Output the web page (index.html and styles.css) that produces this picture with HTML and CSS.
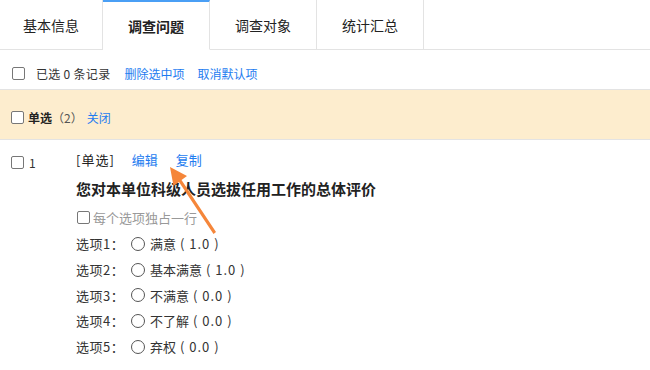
FILE: index.html
```html
<!DOCTYPE html>
<html lang="zh">
<head>
<meta charset="utf-8">
<link rel="stylesheet" href="styles.css">
</head>
<body>
<div class="tabs">
  <div class="tab first">基本信息</div>
  <div class="tab active">调查问题</div>
  <div class="tab">调查对象</div>
  <div class="tab">统计汇总</div>
  <div class="tab-rest"></div>
</div>
<div class="toolbar">
  <span class="cb"></span>
  <span class="sel">已选 0 条记录</span>
  <a class="link">删除选中项</a>
  <a class="link">取消默认项</a>
</div>
<div class="group">
  <span class="cb"></span>
  <b class="gname">单选</b><span class="count">（2）</span>
  <a class="link">关闭</a>
</div>
<div class="question">
  <div class="qleft"><span class="cb"></span><span class="num">1</span></div>
  <div class="qbody">
    <div class="qhead"><span class="qtype">[单选]</span><a class="link">编辑</a><a class="link">复制</a></div>
    <div class="qtitle">您对本单位科级人员选拔任用工作的总体评价</div>
    <div class="qline"><span class="cb"></span><span class="gray">每个选项独占一行</span></div>
    <div class="opts">
      <div class="opt"><span class="olabel">选项1：</span><span class="radio"></span><span>满意<span class="val"> ( 1.0 )</span></span></div>
      <div class="opt"><span class="olabel">选项2：</span><span class="radio"></span><span>基本满意<span class="val"> ( 1.0 )</span></span></div>
      <div class="opt"><span class="olabel">选项3：</span><span class="radio"></span><span>不满意<span class="val"> ( 0.0 )</span></span></div>
      <div class="opt"><span class="olabel">选项4：</span><span class="radio"></span><span>不了解<span class="val"> ( 0.0 )</span></span></div>
      <div class="opt"><span class="olabel">选项5：</span><span class="radio"></span><span>弃权<span class="val"> ( 0.0 )</span></span></div>
    </div>
  </div>
</div>
<svg class="arrow" width="650" height="370" viewBox="0 0 650 370">
  <path d="M170 167 L187 176 L181.5 180 L216 232 L213.5 234 L179 182 L173.5 186 Z" fill="#f5863a"/>
</svg>
</body>
</html>
```
FILE: styles.css
```css
* { box-sizing: border-box; }
body {
  margin: 0;
  width: 650px;
  height: 370px;
  overflow: hidden;
  background: #fff;
  color: #333;
  font-family: "Noto Sans CJK SC", "Noto Sans", sans-serif;
  font-size: 12px;
  position: relative;
}
.tabs {
  display: flex;
  height: 50px;
}
.tab {
  width: 107px;
  height: 50px;
  border-right: 1px solid #e3e3e3;
  border-bottom: 1px solid #e3e3e3;
  display: flex;
  align-items: center;
  justify-content: center;
  font-size: 14px;
  color: #222;
  padding-top: 1px;
}
.tab.first { width: 103px; }
.tab.active {
  border-top: 2px solid #4a9ff5;
  border-bottom-color: transparent;
  font-weight: bold;
  padding-top: 0;
}
.tab-rest {
  flex: 1;
  border-bottom: 1px solid #e3e3e3;
}
.toolbar {
  height: 40px;
  display: flex;
  align-items: center;
  padding-left: 12px;
  border-bottom: 1px solid #e3e3e3;
  padding-top: 7px;
}
.cb {
  display: inline-block;
  width: 13px;
  height: 13px;
  border: 1px solid #777;
  border-radius: 2px;
  background: #fff;
  flex: none;
}
.toolbar .sel { margin-left: 11px; margin-right: 14px; letter-spacing: 0.3px; }
.toolbar .link { margin-right: 13px; }
.link { color: #1e7cf0; }
.group {
  height: 50px;
  background: #fdedce;
  border-bottom: 1px solid #e3e3e3;
  display: flex;
  align-items: center;
  padding-left: 11px;
  padding-top: 5px;
}
.gname { margin-left: 4px; font-weight: bold; color: #222; }
.count { color: #555; margin-right: 4px; }
.question {
  display: flex;
  padding-top: 9px;
}
.qleft {
  width: 76px;
  display: flex;
  align-items: center;
  padding-left: 11px;
  height: 20px;
  margin-top: 3px;
}
.num { margin-left: 5px; font-size: 12px; }
.qbody { display: flex; flex-direction: column; }
.qhead {
  height: 20px;
  display: flex;
  align-items: center;
  font-size: 13px;
}
.qtype { margin-right: 17px; color: #222; letter-spacing: 1px; }
.qhead .link { margin-right: 18px; }
.qtitle {
  font-size: 15px;
  font-weight: bold;
  color: #222;
  margin-top: 10px;
  height: 20px;
  line-height: 20px;
}
.qline {
  display: flex;
  align-items: center;
  margin-top: 8px;
  height: 20px;
  padding-left: 1px;
  font-size: 13px;
}
.gray { color: #999; margin-left: 3px; }
.opts { margin-top: 4px; }
.opt {
  height: 25.7px;
  display: flex;
  align-items: center;
  font-size: 13px;
}
.val { letter-spacing: 1px; }
.olabel { width: 55px; letter-spacing: 0.5px; }
.radio {
  width: 14px;
  height: 14px;
  border: 1px solid #555;
  border-radius: 50%;
  margin-right: 5px;
  flex: none;
}
.arrow {
  position: absolute;
  left: 0;
  top: 0;
  pointer-events: none;
}
```
